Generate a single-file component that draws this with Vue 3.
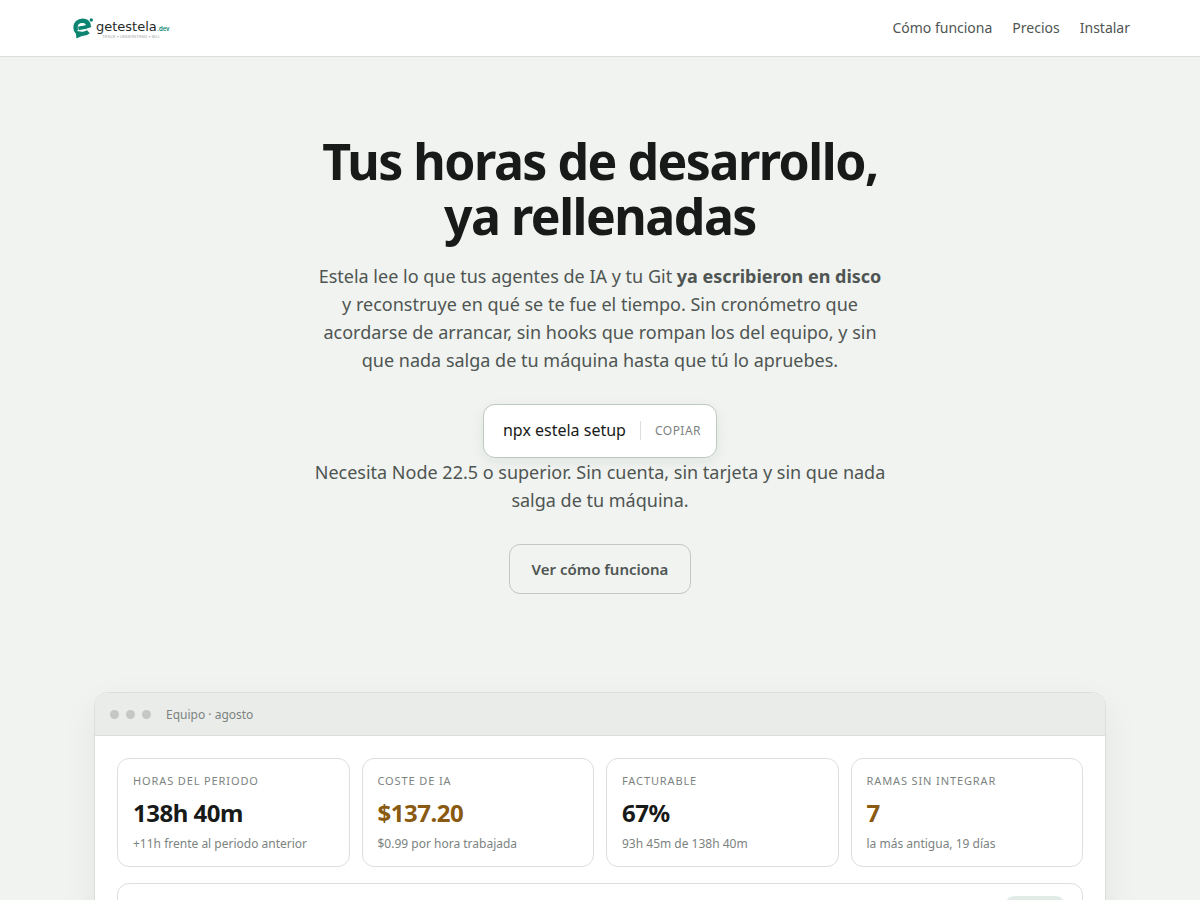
<script setup>
import { ref } from 'vue'

const command = 'npx estela setup'
const copied = ref(false)

const stats = [
  { label: 'Horas del periodo', value: '138h 40m', note: '+11h frente al periodo anterior' },
  { label: 'Coste de IA', value: '$137.20', note: '$0.99 por hora trabajada', warn: true },
  { label: 'Facturable', value: '67%', note: '93h 45m de 138h 40m' },
  { label: 'Ramas sin integrar', value: '7', note: 'la más antigua, 19 días', warn: true }
]

async function copyCommand() {
  await navigator.clipboard.writeText(command)
  copied.value = true
  setTimeout(() => { copied.value = false }, 1500)
}
</script>

<template>
  <header class="topbar">
    <div class="topbar-inner">
      <a class="logo" href="#" aria-label="getestela.dev">
        <svg width="100" height="28" viewBox="0 0 100 28">
          <path d="M8.500 14.800L18.800 12.200C18.300 8.800 15.800 6.800 12.500 6.800 8.500 6.800 5.500 9.700 5.500 13.400c0 3.800 2.800 6.500 6.900 6.500 2.400 0 4.300-.7 5.900-2.200" fill="none" stroke="#0b8571" stroke-width="4.400" />
          <path d="M5.800 17.500L6.400 24.400l5.600-2.300z" fill="#0b8571" />
          <path d="M8.600 12.300c.5-2 1.900-3 3.800-3 1.600 0 2.700.7 3.300 2z" fill="#fff" />
          <path d="M7.500 16.600c4.500.3 9-.5 14-3" fill="none" stroke="#fff" stroke-width="1.200" />
          <circle cx="21.300" cy="6" r="1.700" fill="#0b8571" />
          <text x="26" y="17" class="logo-name">getestela</text>
          <text x="87" y="17" class="logo-tld">.dev</text>
          <text x="32" y="24" class="logo-tag">TRACK  •  UNDERSTAND  •  BILL</text>
        </svg>
      </a>
      <nav class="nav">
        <a href="#como-funciona">Cómo funciona</a>
        <a href="#precios">Precios</a>
        <a href="#instalar">Instalar</a>
      </nav>
    </div>
  </header>

  <main>
    <section class="hero">
      <h1>Tus horas de desarrollo,<br>ya rellenadas</h1>
      <p>
        Estela lee lo que tus agentes de IA y tu Git <strong>ya escribieron en disco</strong>
        y reconstruye en qué se te fue el tiempo. Sin cronómetro que acordarse de arrancar,
        sin hooks que rompan los del equipo, y sin que nada salga de tu máquina hasta que tú lo apruebes.
      </p>
      <button type="button" class="command" @click="copyCommand">
        <span>{{ command }}</span>
        <span class="copy">{{ copied ? 'Copiado' : 'Copiar' }}</span>
      </button>
      <p>Necesita Node 22.5 o superior. Sin cuenta, sin tarjeta y sin que nada salga de tu máquina.</p>
      <a class="more" href="#como-funciona">Ver cómo funciona</a>
    </section>

    <section class="demo">
      <div class="window">
        <div class="window-bar">
          <i></i><i></i><i></i>
          <span>Equipo · agosto</span>
        </div>
        <div class="window-body">
          <div class="stats">
            <div v-for="stat in stats" :key="stat.label" class="stat">
              <div class="stat-label">{{ stat.label }}</div>
              <div class="stat-value" :class="{ warn: stat.warn }">{{ stat.value }}</div>
              <div class="stat-note">{{ stat.note }}</div>
            </div>
          </div>
          <div class="panel">
            <span class="pill"></span>
          </div>
        </div>
      </div>
    </section>
  </main>
</template>

<style>
body {
  margin: 0;
  background: #f0f3f0;
  color: #171a18;
  font-family: "Noto Sans", sans-serif;
}
html {
  scrollbar-width: none;
}
</style>

<style scoped>
* {
  box-sizing: border-box;
}
.topbar {
  background: #fff;
  border-bottom: 1px solid #dbe0dc;
}
.topbar-inner {
  max-width: 1100px;
  height: 56px;
  margin: 0 auto;
  padding: 0 20px;
  display: flex;
  align-items: center;
  justify-content: space-between;
}
.logo svg {
  display: block;
}
.logo-name {
  font: 400 13px "DejaVu Sans", sans-serif;
  fill: #262b29;
}
.logo-tld {
  font: 600 6px "Inter", sans-serif;
  fill: #0b8571;
}
.logo-tag {
  font: 400 4px "Inter", sans-serif;
  fill: #a3a8a5;
}
.nav {
  display: flex;
  gap: 20px;
}
.nav a {
  color: #4f5552;
  font-size: 14px;
  line-height: 20px;
  text-decoration: none;
}
.hero {
  max-width: 614px;
  margin: 0 auto;
  padding: 77px 20px 98px;
  display: flex;
  flex-direction: column;
  align-items: center;
  text-align: center;
}
h1 {
  margin: 0 0 18px;
  font-size: 50px;
  line-height: 55px;
  font-weight: 700;
  letter-spacing: -0.03em;
}
.hero p {
  margin: 0;
  color: #4f5552;
  font-size: 18px;
  line-height: 28px;
}
.command {
  margin-top: 30px;
  height: 54px;
  padding: 0 15px 2px 19px;
  display: flex;
  align-items: center;
  gap: 14px;
  border: 1px solid #bdc8bf;
  border-radius: 12px;
  background: #fff;
  box-shadow: 0 4px 14px rgba(23, 40, 30, 0.07);
  color: #171a18;
  font-family: inherit;
  font-size: 16px;
  cursor: pointer;
}
.copy {
  padding-left: 14px;
  border-left: 1px solid #dbe0dc;
  color: #7c837f;
  font-size: 12px;
  line-height: 19px;
  letter-spacing: 0.04em;
  text-transform: uppercase;
}
.more {
  margin-top: 30px;
  padding: 0 22px;
  border: 1px solid #c3c8c4;
  border-radius: 11px;
  color: #4f5552;
  font-size: 15px;
  font-weight: 600;
  line-height: 48px;
  text-decoration: none;
}
.demo {
  max-width: 1060px;
  margin: 0 auto;
  padding: 0 24px 80px;
}
.window {
  overflow: hidden;
  border: 1px solid #dbdfdc;
  border-radius: 14px;
  background: #fff;
  box-shadow: 0 12px 36px rgba(23, 40, 30, 0.06);
}
.window-bar {
  height: 43px;
  padding: 0 15px;
  display: flex;
  align-items: center;
  gap: 7px;
  border-bottom: 1px solid #dbdfdc;
  background: #eaece9;
}
.window-bar i {
  width: 9px;
  height: 9px;
  border-radius: 50%;
  background: #c4c7c4;
}
.window-bar span {
  margin-left: 8px;
  color: #7c837f;
  font-size: 12px;
}
.window-body {
  padding: 22px;
}
.stats {
  display: grid;
  grid-template-columns: repeat(4, 1fr);
  gap: 12px;
}
.stat {
  padding: 14px 15px 13px;
  border: 1px solid #dcdfdd;
  border-radius: 12px;
}
.stat-label {
  color: #7c837f;
  font-size: 11px;
  line-height: 16px;
  letter-spacing: 0.08em;
  text-transform: uppercase;
}
.stat-value {
  margin: 10px 0 7px;
  font-size: 24px;
  line-height: 28px;
  font-weight: 700;
  letter-spacing: -0.02em;
}
.stat-value.warn {
  color: #8a5a12;
}
.stat-note {
  color: #7c837f;
  font-size: 12px;
  line-height: 19px;
}
.panel {
  min-height: 220px;
  margin-top: 16px;
  padding: 12px 16px;
  display: flex;
  justify-content: flex-end;
  border: 1px solid #dcdfdd;
  border-radius: 12px;
}
.pill {
  width: 62px;
  height: 22px;
  border-radius: 11px;
  background: #e1ece7;
}
</style>
